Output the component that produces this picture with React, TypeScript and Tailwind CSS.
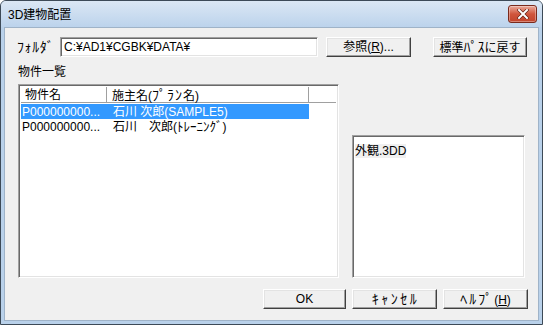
import React from "react";

const F = "font-['Liberation_Sans','Noto_Sans_CJK_JP',sans-serif]";

function Btn({ children, className = "" }: { children: React.ReactNode; className?: string }) {
  return (
    <div
      className={`flex items-center justify-center bg-[#f0f0f0] text-[12px] leading-none text-black border-t border-l border-t-white border-l-white border-b border-r border-b-[#404040] border-r-[#404040] shadow-[inset_-1px_-1px_0_#a0a0a0,inset_1px_1px_0_#e3e3e3] ${className}`}
    >
      {children}
    </div>
  );
}

function Sunken({ children, className = "" }: { children?: React.ReactNode; className?: string }) {
  return (
    <div
      className={`bg-white border-t border-l border-t-[#a0a0a0] border-l-[#a0a0a0] border-b border-r border-b-white border-r-white shadow-[inset_1px_1px_0_#696969,inset_-1px_-1px_0_#e3e3e3] ${className}`}
    >
      {children}
    </div>
  );
}

export default function App() {
  return (
    <div className={`${F} w-[543px] h-[325px] bg-[#b9d1ea] border border-[#3d4a57] rounded-t-[6px] flex flex-col overflow-hidden`}>
      {/* title bar */}
      <div className="h-[26px] flex items-center justify-between pl-[7px] pr-[5px] bg-gradient-to-b from-[#dbe7f4] to-[#bcd3ec]">
        <span className="text-[12px] text-black leading-none mt-[1px]">3D建物配置</span>
        <div className="w-[29px] h-[18px] rounded-[3px] border border-[#7a2a1c] bg-gradient-to-b from-[#e9a99a] via-[#d0553c] to-[#c2442c] flex items-center justify-center mb-[1px] shadow-[inset_0_0_0_1px_rgba(255,255,255,0.35)]">
          <svg width="12" height="10" viewBox="0 0 12 10">
            <path d="M2 1 L10 9 M10 1 L2 9" stroke="#5a1a10" strokeWidth="3.2" strokeLinecap="square" />
            <path d="M2 1 L10 9 M10 1 L2 9" stroke="#ffffff" strokeWidth="2" strokeLinecap="square" />
          </svg>
        </div>
      </div>
      {/* client */}
      <div className="flex-1 mx-[3px] mb-[3px] bg-[#f0f0f0] border border-[#9fb3c8] flex flex-col pl-[12px] pr-[10px]">
        {/* folder row */}
        <div className="flex items-center mt-[9px] h-[20px]">
          <span className="w-[43px] text-[14px] leading-none tracking-[0.6px]">ﾌｫﾙﾀﾞ</span>
          <Sunken className="w-[258px] h-[20px] flex items-center pl-[3px]">
            <span className="text-[12px] leading-none">C:¥AD1¥CGBK¥DATA¥</span>
          </Sunken>
          <Btn className="ml-[8px] w-[85px] h-[20px]">
            参照(<span className="underline">R</span>)...
          </Btn>
          <Btn className="ml-[22px] w-[94px] h-[20px]">
            <span>標準<span className="text-[14px]">ﾊﾟｽ</span>に戻す</span>
          </Btn>
        </div>
        {/* middle */}
        <div className="flex mt-[9px]">
          <div className="flex flex-col">
            <span className="text-[12px] leading-none h-[14px] pl-[1px]">物件一覧</span>
            <Sunken className="mt-[4px] ml-[1px] w-[321px] h-[194px] flex flex-col p-[2px]">
              <div className="flex h-[16px] border-b border-[#a0a0a0] text-[12px] leading-none">
                <div className="w-[86px] border-r border-[#a0a0a0] flex items-center pl-[4px]">物件名</div>
                <div className="w-[202px] border-r border-[#a0a0a0] flex items-center pl-[5px]">
                  <span>
                    施主名(<span className="text-[14px] tracking-[1px]">ﾌﾟﾗﾝ</span>名)
                  </span>
                </div>
                <div className="flex-1"></div>
              </div>
              <div className="flex h-[15px] mt-[1px] text-[12px] leading-none">
                <div className="w-[288px] bg-[#3399ff] text-white flex items-center">
                  <span className="w-[86px] pl-[1px]">P000000000...</span>
                  <span className="pl-[6px]">石川 次郎(SAMPLE5)</span>
                </div>
              </div>
              <div className="flex h-[15px] text-[12px] leading-none items-center">
                <span className="w-[86px] pl-[1px]">P000000000...</span>
                <span className="pl-[6px]">
                  石川　次郎(<span className="text-[13px]">ﾄﾚｰﾆﾝｸﾞ</span>)
                </span>
              </div>
            </Sunken>
          </div>
          <Sunken className="self-end ml-[13px] w-[173px] h-[143px] p-[2px]">
            <span className="inline-block bg-[#f0f0f0] text-[12px] leading-none h-[14px] pt-[1px]">外観.3DD</span>
          </Sunken>
        </div>
        {/* bottom buttons */}
        <div className="flex justify-end mt-[11px]">
          <Btn className="w-[83px] h-[20px]">OK</Btn>
          <Btn className="ml-[6px] w-[85px] h-[20px]">
            <span className="text-[14px] tracking-[2.5px] pl-[2px]">ｷｬﾝｾﾙ</span>
          </Btn>
          <Btn className="ml-[6px] w-[85px] h-[20px]">
            <span>
              <span className="text-[14px] tracking-[2px]">ﾍﾙﾌﾟ</span>(<span className="underline">H</span>)
            </span>
          </Btn>
        </div>
      </div>
    </div>
  );
}
